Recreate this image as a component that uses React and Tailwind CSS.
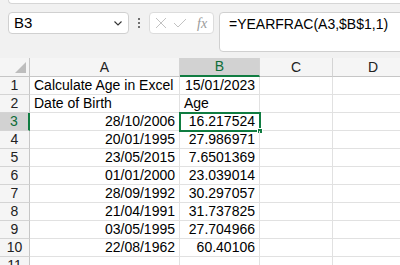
import React from "react";

const rows = [
  ["Calculate Age in Excel", "15/01/2023"],
  ["Date of Birth", "Age"],
  ["28/10/2006", "16.217524"],
  ["20/01/1995", "27.986971"],
  ["23/05/2015", "7.6501369"],
  ["01/01/2000", "23.039014"],
  ["28/09/1992", "30.297057"],
  ["21/04/1991", "31.737825"],
  ["03/05/1995", "27.704966"],
  ["22/08/1962", "60.40106"],
  ["", ""],
];

const ColHeader = ({ label, active, last }) => (
  <div
    className={`flex items-center justify-center h-[19px] border-r border-[#d4d4d4] ${
      active
        ? "bg-[#d2d2d2] text-[#0e6d38] border-b-2 border-b-[#107c41]"
        : "bg-[#f5f5f5] text-[#222] border-b border-b-[#c6c6c6]"
    } ${last ? "border-r-0" : ""}`}
  >
    {label}
  </div>
);

const App = () => {
  return (
    <div
      className="w-[400px] h-[265px] overflow-hidden bg-[#f1f1f1] text-[14px] text-black"
      style={{ fontFamily: '"Liberation Sans", Arial, sans-serif' }}
    >
      {/* ribbon edge */}
      <div className="h-[12px]">
        <div className="ml-[8px] h-[4px] bg-white border-b border-l border-[#d6d6d6] rounded-bl-[4px]" />
      </div>

      {/* formula bar */}
      <div className="flex items-start pl-[8px] h-[46px]">
        <div className="shrink-0 w-[121px] h-[22px] bg-white border border-[#d0d0d0] rounded-[4px] flex items-center justify-between pl-[5px] pr-[5px]">
          <span className="text-[15px]">B3</span>
          <svg width="10" height="10" viewBox="0 0 10 10">
            <path d="M1.5 3.5 L5 7 L8.5 3.5" fill="none" stroke="#333" strokeWidth="1.1" />
          </svg>
        </div>
        <div className="shrink-0 w-[20px] h-[22px] flex flex-col items-center justify-center gap-[2px]">
          <span className="w-[2px] h-[2px] bg-[#444] rounded-full" />
          <span className="w-[2px] h-[2px] bg-[#444] rounded-full" />
          <span className="w-[2px] h-[2px] bg-[#444] rounded-full" />
        </div>
        <div className="shrink-0 w-[65px] h-[22px] bg-white border border-[#dcdcdc] rounded-[4px] flex items-center pl-[5px] gap-[6px]">
          <svg width="12" height="12" viewBox="0 0 12 12">
            <path d="M1 1 L11 11 M11 1 L1 11" stroke="#c2c2c2" strokeWidth="1" fill="none" />
          </svg>
          <svg width="14" height="12" viewBox="0 0 14 12">
            <path d="M1 6 L5 10 L13 2" stroke="#c2c2c2" strokeWidth="1" fill="none" />
          </svg>
          <span
            className="italic text-[#9a9a9a] text-[14px] ml-[4px]"
            style={{ fontFamily: '"Liberation Serif", serif' }}
          >
            fx
          </span>
        </div>
        <div className="shrink-0 ml-[5px] w-[200px] h-[40px] bg-white border border-[#d0d0d0] rounded-[4px] pl-[9px] pt-[2px] leading-[19px] whitespace-nowrap">
          =YEARFRAC(A3,$B$1,1)
        </div>
      </div>

      {/* grid */}
      <div className="grid grid-cols-[30px_150px_80px_73px_80px] bg-white">
        <div className="relative h-[19px] bg-[#f5f5f5] border-r border-b border-[#c6c6c6]">
          <svg className="absolute right-[3px] bottom-[3px]" width="11" height="11" viewBox="0 0 11 11">
            <path d="M11 0 L11 11 L0 11 Z" fill="#bdbdbd" />
          </svg>
        </div>
        <ColHeader label="A" />
        <ColHeader label="B" active />
        <ColHeader label="C" />
        <ColHeader label="D" last />

        {rows.map((r, i) => {
          const n = i + 1;
          const active = n === 3;
          const numeric = n !== 1 && n !== 2;
          return (
            <React.Fragment key={n}>
              <div
                className={`h-[18px] flex items-center justify-center border-b border-[#d4d4d4] ${
                  active
                    ? "bg-[#d2d2d2] text-[#0e6d38] border-r-2 border-r-[#107c41]"
                    : "bg-[#f5f5f5] text-[#222] border-r border-r-[#c6c6c6]"
                }`}
              >
                {n}
              </div>
              <div
                className={`h-[18px] flex items-center px-[4px] border-r border-b border-[#e1e1e1] whitespace-nowrap ${
                  numeric ? "justify-end" : "justify-start"
                }`}
              >
                {r[0]}
              </div>
              <div
                className={`relative h-[18px] flex items-center px-[4px] border-r border-b border-[#e1e1e1] whitespace-nowrap ${
                  n === 2 ? "justify-start" : "justify-end"
                }`}
              >
                {r[1]}
                {active && (
                  <>
                    <div className="absolute -left-[1px] -top-[1px] w-[82px] h-[20px] border-2 border-[#107c41]" />
                    <div className="absolute -right-[4px] -bottom-[4px] w-[6px] h-[6px] bg-[#107c41] border border-white" />
                  </>
                )}
              </div>
              <div className="h-[18px] border-r border-b border-[#e1e1e1]" />
              <div className="h-[18px] border-b border-[#e1e1e1]" />
            </React.Fragment>
          );
        })}
      </div>
    </div>
  );
};

export default App;
